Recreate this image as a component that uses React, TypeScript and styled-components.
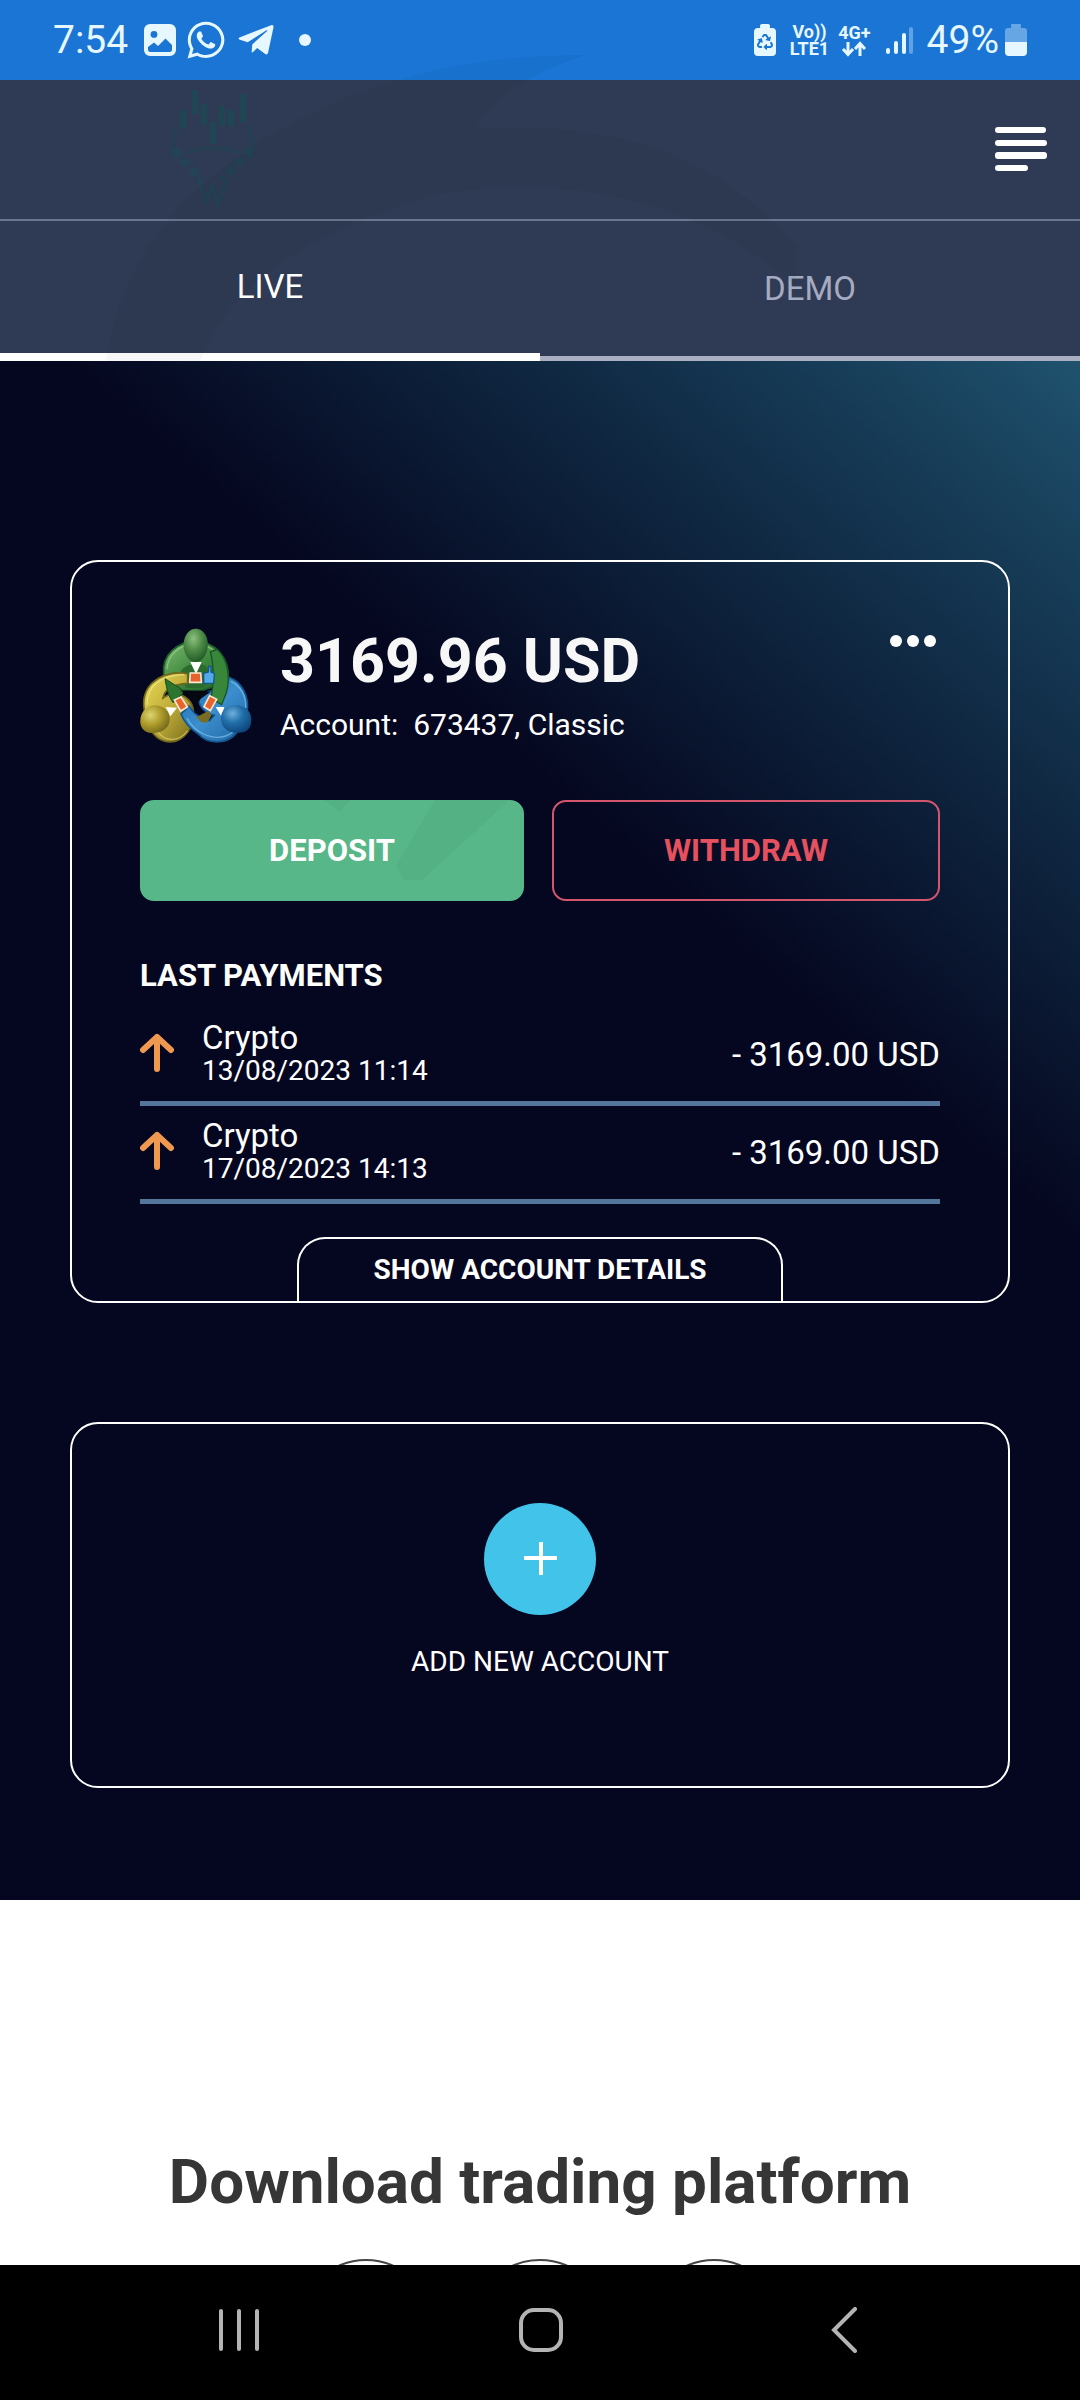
import React from "react";
import styled, { createGlobalStyle } from "styled-components";
import { FaWhatsapp, FaTelegramPlane, FaRecycle } from "react-icons/fa";

const GlobalStyle = createGlobalStyle`
  *, *::before, *::after { box-sizing: border-box; }
  body {
    margin: 0;
    background: #000;
    font-family: Roboto, "Noto Sans", sans-serif;
  }
  button { font-family: inherit; cursor: pointer; }
  h1, h2, p, ul { margin: 0; padding: 0; }
`;

const Screen = styled.div`
  position: relative;
  display: flex;
  flex-direction: column;
  height: 100vh;
`;

/* Faint brand swirl printed over the top of the app. */
const Watermark = styled.svg`
  position: absolute;
  top: 0;
  left: 0;
  pointer-events: none;
  opacity: 0.03;
`;

/* ---------- status bar ---------- */

const StatusBar = styled.div`
  display: flex;
  flex: none;
  align-items: center;
  justify-content: space-between;
  height: 80px;
  padding: 0 53px;
  background: #1a75d5;
  color: #e6f7ff;
`;

const StatusGroup = styled.div<{ $gap: number }>`
  display: flex;
  align-items: center;
  gap: ${(p) => p.$gap}px;
`;

const StatusText = styled.span`
  font-size: 39px;
  line-height: 44px;
`;

const NetworkLabel = styled.span`
  display: flex;
  flex-direction: column;
  align-items: center;
  font-size: 18px;
  font-weight: 700;
  line-height: 17px;
`;

const Dot = styled.span`
  width: 12px;
  height: 12px;
  margin-left: 14px;
  border-radius: 50%;
  background: currentColor;
`;

const BatterySaver = styled.span`
  display: grid;
  place-items: center;
  position: relative;
  width: 22px;
  height: 28px;
  margin-top: 3px;
  border-radius: 4px;
  background: #e6f7ff;
  color: #1a75d5;

  &::before {
    content: "";
    position: absolute;
    top: -4px;
    left: 6px;
    width: 10px;
    height: 5px;
    border-radius: 2px;
    background: #e6f7ff;
  }
`;

/* ---------- header ---------- */

const Content = styled.div`
  flex: 1;
  min-height: 0;
  overflow-y: auto;
  scrollbar-width: none;
  background: #fff;
`;

const Header = styled.header`
  display: flex;
  align-items: center;
  justify-content: space-between;
  height: 141px;
  padding: 0 32px 0 164px;
  border-bottom: 2px solid #6b7690;
  background: #2f3a54;
`;

const BrandLink = styled.a`
  display: block;
  height: 132px;
`;

const IconButton = styled.button`
  display: block;
  padding: 0;
  border: 0;
  background: none;
  color: #fff;

  svg { display: block; }
`;

const Tabs = styled.nav`
  display: flex;
  height: 140px;
  background: #2f3a54;
`;

const Tab = styled.button<{ $active?: boolean }>`
  flex: 1;
  padding: 0;
  border: 0;
  border-bottom: ${(p) => (p.$active ? "8px solid #fff" : "5px solid #aaafc2")};
  background: none;
  color: ${(p) => (p.$active ? "#fff" : "#a5abc0")};
  font-size: 33px;
  line-height: 40px;
`;

/* ---------- account area ---------- */

const Hero = styled.main`
  display: flex;
  flex-direction: column;
  gap: 119px;
  padding: 199px 70px 112px;
  background: linear-gradient(221deg, #1f526e 0%, #173d58 9%, #0f2640 20%, #05061f 36%);
`;

const Card = styled.section`
  display: flex;
  flex-direction: column;
  padding: 66px 68px 0;
  border: 2px solid #fff;
  border-radius: 28px;
  color: #fff;
`;

const AccountHeader = styled.div`
  display: flex;
  gap: 27px;
  margin-bottom: 54px;
`;

const AccountInfo = styled.div`
  display: flex;
  flex: 1;
  flex-direction: column;
  gap: 10px;
`;

const Balance = styled.h1`
  color: #f7f7f7;
  font-size: 61px;
  font-weight: 700;
  line-height: 66px;
`;

const AccountNumber = styled.p`
  font-size: 30px;
  line-height: 42px;
  white-space: pre;
`;

const MoreButton = styled(IconButton)`
  align-self: flex-start;
  padding: 7px 4px 7px 0;
`;

const Actions = styled.div`
  display: grid;
  grid-template-columns: 384fr 388fr;
  gap: 28px;
  margin-bottom: 54px;
`;

const ActionButton = styled.button<{ $tone: "solid" | "outline" }>`
  height: 101px;
  border: 2px solid ${(p) => (p.$tone === "solid" ? "#57b788" : "#d4566c")};
  border-radius: 14px;
  background: ${(p) => (p.$tone === "solid" ? "#57b788" : "transparent")};
  color: ${(p) => (p.$tone === "solid" ? "#fff" : "#e6515f")};
  font-size: 31px;
  font-weight: 700;
`;

const SectionTitle = styled.h2`
  margin-bottom: 11px;
  font-size: 31px;
  font-weight: 700;
  line-height: 42px;
`;

const Payments = styled.ul`
  margin-bottom: 33px;
  list-style: none;
`;

const Payment = styled.li`
  display: flex;
  align-items: center;
  gap: 28px;
  height: 98px;
  border-bottom: 5px solid #54769b;
`;

const Direction = styled.span`
  padding-bottom: 4px;

  svg { display: block; }
`;

const PaymentInfo = styled.div`
  display: flex;
  flex: 1;
  flex-direction: column;
  padding-bottom: 4px;
`;

const PaymentName = styled.span`
  font-size: 33px;
  line-height: 36px;
`;

const PaymentDate = styled.time`
  font-size: 28px;
  line-height: 30px;
`;

const DetailsButton = styled.button`
  align-self: center;
  width: 486px;
  max-width: 100%;
  height: 64px;
  padding: 0 0 2px;
  border: 2px solid #fff;
  border-bottom: 0;
  border-radius: 28px 28px 0 0;
  background: none;
  color: #fff;
  font-size: 28px;
  font-weight: 700;
`;

const AddCard = styled(Card)`
  align-items: center;
  height: 366px;
  padding-top: 79px;
`;

const AddButton = styled.button`
  display: flex;
  flex-direction: column;
  align-items: center;
  gap: 31px;
  padding: 0;
  border: 0;
  background: none;
  color: #fff;
  font-size: 28px;
  line-height: 32px;
`;

const PlusCircle = styled.span`
  display: grid;
  place-items: center;
  width: 112px;
  height: 112px;
  border-radius: 50%;
  background: #42c4ea;
`;

/* ---------- download area ---------- */

const Download = styled.section`
  display: flex;
  flex-direction: column;
  align-items: center;
  gap: 41px;
  padding: 246px 40px 0;
`;

const DownloadTitle = styled.h2`
  color: #363636;
  font-size: 62px;
  font-weight: 700;
  line-height: 72px;
`;

const Platforms = styled.div`
  display: flex;
  gap: 42px;
`;

const PlatformLink = styled.a`
  width: 132px;
  height: 132px;
  border: 2px solid #444;
  border-radius: 50%;
`;

/* ---------- system navigation ---------- */

const SystemNav = styled.nav`
  display: flex;
  flex: none;
  align-items: center;
  justify-content: space-between;
  height: 135px;
  padding: 0 215px 6px 217px;
  background: #000;
`;

const NavButton = styled(IconButton)`
  color: #b4b4b4;
`;

/* ---------- drawings ---------- */

const GalleryIcon = () => (
  <svg width="32" height="32" viewBox="0 0 32 32" aria-hidden="true">
    <path
      fill="currentColor"
      fillRule="evenodd"
      d="M6 0h20a6 6 0 0 1 6 6v20a6 6 0 0 1-6 6H6a6 6 0 0 1-6-6V6a6 6 0 0 1 6-6zM10 7a3.4 3.4 0 1 0 0 6.8A3.4 3.4 0 0 0 10 7zM4 23v2.500a2.500 2.500 0 0 0 2.500 2.500h19a2.500 2.500 0 0 0 2.500-2.500V21l-6.500-6.500L14 22l-4-3.500z"
    />
  </svg>
);

const DataArrows = () => (
  <svg width="26" height="16" viewBox="0 0 26 16" fill="none" stroke="currentColor" strokeWidth="3" aria-hidden="true">
    <path d="M7 1v12M2 8l5 5.500L12 8M19 15V3M14 8l5-5.500L24 8" />
  </svg>
);

const SignalIcon = () => (
  <svg width="28" height="30" viewBox="0 0 28 30" fill="none" stroke="currentColor" strokeWidth="4" strokeLinecap="round" aria-hidden="true">
    <path d="M3 25v2M11 18v9M19 10v17" />
    <path d="M26 4v23" opacity=".35" />
  </svg>
);

const BatteryIcon = () => (
  <svg width="22" height="32" viewBox="0 0 22 32" aria-hidden="true">
    <path fill="currentColor" opacity=".38" d="M7 0h8a1 1 0 0 1 1 1v3h3a3 3 0 0 1 3 3v11H0V7a3 3 0 0 1 3-3h3V1a1 1 0 0 1 1-1z" />
    <path fill="currentColor" d="M0 18h22v10a4 4 0 0 1-4 4H4a4 4 0 0 1-4-4z" />
  </svg>
);

const BrandMark = () => (
  <svg width="96" height="132" viewBox="0 0 96 132" fill="none" stroke="#1a4b53" aria-hidden="true">
    <path
      strokeWidth="6"
      opacity=".75"
      d="M31 6v24M40 20v21M19 26v18M49 38v22M58 22v20M67 26v16M79 10v28"
    />
    <path
      strokeWidth="4"
      opacity=".4"
      d="M12 44c-5 12-5 24 0 33M84 40c5 12 6 26 0 38M24 68c14-5 36-5 50 0"
    />
    <path
      strokeWidth="9"
      opacity=".5"
      strokeDasharray="9 4"
      d="M12 64c5 14 16 18 24 32M86 64c-6 14-18 18-28 32"
    />
    <path strokeWidth="4" opacity=".5" d="M34 94l8 24 6-16 6 18 9-24" />
  </svg>
);

const MenuIcon = () => (
  <svg width="54" height="48" viewBox="0 0 54 48" fill="currentColor" aria-hidden="true">
    <rect x="1" y="1" width="51" height="6" rx="3" />
    <rect x="1" y="14" width="52" height="6" rx="3" />
    <rect x="1" y="26" width="52" height="7" rx="3" />
    <rect x="1" y="39" width="33" height="6" rx="3" />
  </svg>
);

const TraderLogo = () => (
  <svg width="113" height="116" viewBox="31 52 339 348" aria-hidden="true">
    <defs>
      <linearGradient id="greenBody" x1="0" y1="0" x2="1" y2="1">
        <stop offset="0" stopColor="#7dbb72" />
        <stop offset=".5" stopColor="#3f8a3e" />
        <stop offset="1" stopColor="#20662a" />
      </linearGradient>
      <radialGradient id="greenHead" cx=".4" cy=".3" r=".75">
        <stop offset="0" stopColor="#8dc07f" />
        <stop offset=".5" stopColor="#4b8943" />
        <stop offset="1" stopColor="#1d5626" />
      </radialGradient>
      <linearGradient id="goldBody" x1="0" y1="0" x2="1" y2="1">
        <stop offset="0" stopColor="#e8dc55" />
        <stop offset=".5" stopColor="#c1ae3b" />
        <stop offset="1" stopColor="#776b1a" />
      </linearGradient>
      <radialGradient id="goldHead" cx=".35" cy=".35" r=".75">
        <stop offset="0" stopColor="#dcd470" />
        <stop offset=".5" stopColor="#ac9a2a" />
        <stop offset="1" stopColor="#6d6218" />
      </radialGradient>
      <linearGradient id="blueBody" x1="0" y1="0" x2="1" y2="1">
        <stop offset="0" stopColor="#1d6cae" />
        <stop offset=".5" stopColor="#3c8ece" />
        <stop offset="1" stopColor="#1b639f" />
      </linearGradient>
      <radialGradient id="blueHead" cx=".38" cy=".3" r=".75">
        <stop offset="0" stopColor="#6fb0dd" />
        <stop offset=".45" stopColor="#226fa9" />
        <stop offset="1" stopColor="#0d447b" />
      </radialGradient>
    </defs>
    {/* green figure */}
    <path d="M102 190c-6-58 42-98 96-98s104 46 98 118l-20 10-60 20H160l-56-34z" fill="url(#greenBody)" stroke="#1e5a2b" strokeWidth="5" />
    <path d="M112 176c2-44 38-74 82-76 54 0 92 40 94 90" fill="none" stroke="#a6d59a" strokeWidth="4" opacity=".6" />
    <path d="M150 190c8-22 28-32 48-28 26-6 46 10 50 34l-28 36h-50z" fill="#2b6c2e" />
    {/* gold figure */}
    <path d="M44 300c-12-70 36-112 112-114l18 4v28c-40 2-68 14-74 44 36-26 92-8 92 50 0 36-28 82-70 82-30 0-56-20-62-50z" fill="url(#goldBody)" stroke="#6e661d" strokeWidth="5" />
    <path d="M52 282c0-58 42-88 112-90" fill="none" stroke="#f7f0a0" strokeWidth="4" opacity=".6" />
    <path d="M82 360c22 34 66 36 92 0" fill="none" stroke="#eadb76" strokeWidth="4" opacity=".6" />
    {/* blue figure */}
    <path d="M298 200c38 14 62 56 54 104l-22 48c-28 54-96 50-124 18-22-14-42-34-52-60l24-24c16 26 36 40 62 44l14-16c-32-8-50-32-46-52 20-22 48-28 78-16z" fill="url(#blueBody)" stroke="#14558e" strokeWidth="5" />
    <path d="M304 212c30 14 46 46 44 80M172 322c30 60 114 80 150 28" fill="none" stroke="#8fccf2" strokeWidth="4" opacity=".6" />
    <path d="M200 320l36-20 10 14-14 22-18-2z" fill="#776d24" />
    {/* hollow between the three */}
    <path d="M152 240c24-2 44 2 68 0l22 4-26 18c-14 12-14 28-14 40l-6 8c-2-30-12-52-36-62z" fill="#050711" />
    {/* arms linking the figures */}
    <path d="M262 116c30 24 42 82 28 130l-14 36-32-18c8-40 10-100-2-140z" fill="#37863a" stroke="#195426" strokeWidth="4" />
    <path d="M106 204l44 28 10 16-30 28c-12-18-18-34-24-72z" fill="#2d742f" stroke="#174b22" strokeWidth="3" />
    <path d="M222 188l14-4 2-18 6 2v16l10 4-2 30h-30z" fill="#54aae6" stroke="#14558e" strokeWidth="4" />
    {/* collars */}
    <path d="M182 154h34l-17 36z" fill="#fff" />
    <path d="M108 289l34 2-20 26z" fill="#fff" />
    <path d="M258 289h26l-9 28z" fill="#fff" />
    {/* cards */}
    <g fill="#e8622c" stroke="#fbe6cf" strokeWidth="5">
      <path d="M182 187h31l2 28h-35z" />
      <path d="M134 268l20-9 19 30-20 12z" />
      <path d="M240 255l21 11-19 34-19-12z" />
    </g>
    {/* heads */}
    <path d="M164 120c-8-32 8-66 34-66s44 32 34 66c-6 22-20 34-34 34s-28-12-34-34z" fill="url(#greenHead)" />
    <path d="M32 330c0-26 22-48 46-46 28 2 44 22 42 44-2 26-24 38-46 38-26 6-44-14-42-36z" fill="url(#goldHead)" />
    <path d="M274 322c0-24 20-40 46-38 30 0 50 24 44 54-4 24-22 30-44 28-26 0-46-16-46-44z" fill="url(#blueHead)" />
  </svg>
);

const DotsIcon = () => (
  <svg width="46" height="12" viewBox="0 0 46 12" fill="currentColor" aria-hidden="true">
    <circle cx="6" cy="6" r="6" />
    <circle cx="23" cy="6" r="6" />
    <circle cx="40" cy="6" r="6" />
  </svg>
);

const UpArrow = () => (
  <svg width="34" height="40" viewBox="0 0 34 40" fill="none" stroke="#ee9850" strokeWidth="6" strokeLinecap="round" strokeLinejoin="round" aria-hidden="true">
    <path d="M17 36V4M3 17L17 4l14 13" />
  </svg>
);

const PlusIcon = () => (
  <svg width="34" height="34" viewBox="0 0 34 34" stroke="#fff" strokeWidth="4" aria-hidden="true">
    <path d="M18 0v33M1 16h33" />
  </svg>
);

const payments = [
  { name: "Crypto", date: "13/08/2023 11:14", amount: "- 3169.00 USD" },
  { name: "Crypto", date: "17/08/2023 14:13", amount: "- 3169.00 USD" },
];

const platforms = ["Windows", "Android", "iOS"];

export default function App() {
  return (
    <Screen>
      <GlobalStyle />
      <StatusBar>
        <StatusGroup $gap={16}>
          <StatusText>7:54</StatusText>
          <StatusGroup $gap={9}>
            <GalleryIcon />
            <FaWhatsapp size={42} />
            <FaTelegramPlane size={40} />
            <Dot />
          </StatusGroup>
        </StatusGroup>
        <StatusGroup $gap={14}>
          <BatterySaver>
            <FaRecycle size={16} />
          </BatterySaver>
          <StatusGroup $gap={9}>
            <NetworkLabel>
              <span>Vo))</span>
              <span>LTE1</span>
            </NetworkLabel>
            <NetworkLabel>
              <span>4G+</span>
              <DataArrows />
            </NetworkLabel>
          </StatusGroup>
          <SignalIcon />
          <StatusGroup $gap={6}>
            <StatusText>49%</StatusText>
            <BatteryIcon />
          </StatusGroup>
        </StatusGroup>
      </StatusBar>

      <Content>
        <Header>
          <BrandLink href="#" aria-label="Home">
            <BrandMark />
          </BrandLink>
          <IconButton type="button" aria-label="Menu">
            <MenuIcon />
          </IconButton>
        </Header>
        <Tabs>
          <Tab type="button" $active>LIVE</Tab>
          <Tab type="button">DEMO</Tab>
        </Tabs>

        <Hero>
          <Card>
            <AccountHeader>
              <TraderLogo />
              <AccountInfo>
                <Balance>3169.96 USD</Balance>
                <AccountNumber>{"Account:  673437, Classic"}</AccountNumber>
              </AccountInfo>
              <MoreButton type="button" aria-label="More options">
                <DotsIcon />
              </MoreButton>
            </AccountHeader>
            <Actions>
              <ActionButton type="button" $tone="solid">DEPOSIT</ActionButton>
              <ActionButton type="button" $tone="outline">WITHDRAW</ActionButton>
            </Actions>
            <SectionTitle>LAST PAYMENTS</SectionTitle>
            <Payments>
              {payments.map((p) => (
                <Payment key={p.date}>
                  <Direction>
                    <UpArrow />
                  </Direction>
                  <PaymentInfo>
                    <PaymentName>{p.name}</PaymentName>
                    <PaymentDate>{p.date}</PaymentDate>
                  </PaymentInfo>
                  <PaymentName>{p.amount}</PaymentName>
                </Payment>
              ))}
            </Payments>
            <DetailsButton type="button">SHOW ACCOUNT DETAILS</DetailsButton>
          </Card>

          <AddCard>
            <AddButton type="button">
              <PlusCircle>
                <PlusIcon />
              </PlusCircle>
              ADD NEW ACCOUNT
            </AddButton>
          </AddCard>
        </Hero>

        <Download>
          <DownloadTitle>Download trading platform</DownloadTitle>
          <Platforms>
            {platforms.map((name) => (
              <PlatformLink key={name} href="#" aria-label={name} />
            ))}
          </Platforms>
        </Download>
      </Content>

      <SystemNav>
        <NavButton type="button" aria-label="Recent apps">
          <svg width="44" height="44" viewBox="0 0 44 44" fill="none" stroke="currentColor" strokeWidth="4" strokeLinecap="round">
            <path d="M4 3v38M22 3v38M40 3v38" />
          </svg>
        </NavButton>
        <NavButton type="button" aria-label="Home screen">
          <svg width="46" height="46" viewBox="0 0 46 46" fill="none" stroke="currentColor" strokeWidth="4">
            <rect x="3" y="3" width="40" height="40" rx="13" />
          </svg>
        </NavButton>
        <NavButton type="button" aria-label="Back">
          <svg width="44" height="46" viewBox="0 0 44 46" fill="none" stroke="currentColor" strokeWidth="4" strokeLinecap="round">
            <path d="M34 2L13 23l21 21" />
          </svg>
        </NavButton>
      </SystemNav>

      <Watermark width="820" height="900" viewBox="0 0 820 900" aria-hidden="true">
        <path d="M106 361c14-90 60-170 190-240 90-46 180-66 290-66-60 20-90 40-110 74 130-8 240 20 320 118v40C700 200 560 170 430 196c-130 40-200 90-230 165z" />
        <path d="M436 798h76l-90 82h-18l-8-14zM322 798h30l-12 14z" />
      </Watermark>
    </Screen>
  );
}
